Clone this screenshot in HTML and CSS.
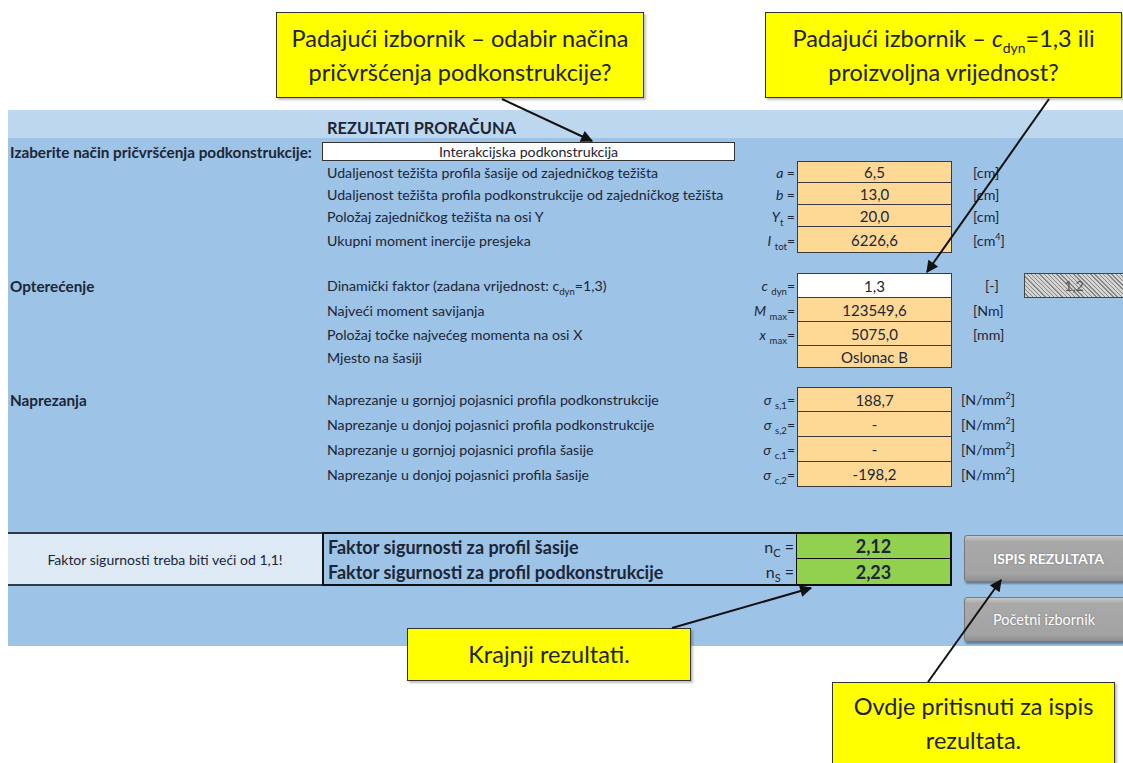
FILE: index.html
```html
<!DOCTYPE html>
<html lang="hr">

<head>
    <meta charset="UTF-8">
    <meta name="viewport" content="width=device-width, initial-scale=1.0">
    <title>Rezultati proračuna</title>
    <link rel="stylesheet" href="styles.css">
</head>

<body>
    <div class="page">
        <div class="sheet">
            <div class="row head">
                <div class="side"></div>
                <div class="title">REZULTATI PRORAČUNA</div>
            </div>

            <div class="row sel">
                <div class="side strong">Izaberite način pričvršćenja podkonstrukcije:</div>
                <div class="desc"><div class="dropdown">Interakcijska podkonstrukcija</div></div>
            </div>

            <!-- geometrija presjeka -->
            <div class="group">
                <div class="row first">
                    <div class="side"></div>
                    <div class="desc"><span>Udaljenost težišta profila šasije od zajedničkog težišta</span><span class="sym"><i>a</i> =</span></div>
                    <div class="val">6,5</div>
                    <div class="unit">[cm]</div>
                </div>
                <div class="row">
                    <div class="side"></div>
                    <div class="desc"><span>Udaljenost težišta profila podkonstrukcije od zajedničkog težišta</span><span class="sym"><i>b</i> =</span></div>
                    <div class="val">13,0</div>
                    <div class="unit">[cm]</div>
                </div>
                <div class="row">
                    <div class="side"></div>
                    <div class="desc"><span>Položaj zajedničkog težišta na osi Y</span><span class="sym"><i>Y</i><sub>t</sub> =</span></div>
                    <div class="val">20,0</div>
                    <div class="unit">[cm]</div>
                </div>
                <div class="row tall">
                    <div class="side"></div>
                    <div class="desc"><span>Ukupni moment inercije presjeka</span><span class="sym"><i>I</i> <sub>tot</sub>=</span></div>
                    <div class="val">6226,6</div>
                    <div class="unit">[cm<sup>4</sup>]</div>
                </div>
            </div>

            <!-- opterecenje -->
            <div class="group">
                <div class="row first h25">
                    <div class="side strong">Opterećenje</div>
                    <div class="desc"><span>Dinamički faktor (zadana vrijednost: c<sub>dyn</sub>=1,3)</span><span class="sym"><i>c</i> <sub>dyn</sub>=</span></div>
                    <div class="val input">1,3</div>
                    <div class="unit extra"><span class="dash">[-]</span><span class="hatch">1,2</span></div>
                </div>
                <div class="row h24">
                    <div class="side"></div>
                    <div class="desc"><span>Najveći moment savijanja</span><span class="sym"><i>M</i> <sub>max</sub>=</span></div>
                    <div class="val">123549,6</div>
                    <div class="unit">[Nm]</div>
                </div>
                <div class="row h24">
                    <div class="side"></div>
                    <div class="desc"><span>Položaj točke najvećeg momenta na osi X</span><span class="sym"><i>x</i> <sub>max</sub>=</span></div>
                    <div class="val">5075,0</div>
                    <div class="unit">[mm]</div>
                </div>
                <div class="row">
                    <div class="side"></div>
                    <div class="desc"><span>Mjesto na šasiji</span></div>
                    <div class="val">Oslonac B</div>
                    <div class="unit"></div>
                </div>
            </div>

            <!-- naprezanja -->
            <div class="group stress">
                <div class="row first h25">
                    <div class="side strong">Naprezanja</div>
                    <div class="desc"><span>Naprezanje u gornjoj pojasnici profila podkonstrukcije</span><span class="sym"><i>σ</i> <sub>s,1</sub>=</span></div>
                    <div class="val">188,7</div>
                    <div class="unit">[N/mm<sup>2</sup>]</div>
                </div>
                <div class="row h25">
                    <div class="side"></div>
                    <div class="desc"><span>Naprezanje u donjoj pojasnici profila podkonstrukcije</span><span class="sym"><i>σ</i> <sub>s,2</sub>=</span></div>
                    <div class="val">-</div>
                    <div class="unit">[N/mm<sup>2</sup>]</div>
                </div>
                <div class="row h25">
                    <div class="side"></div>
                    <div class="desc"><span>Naprezanje u gornjoj pojasnici profila šasije</span><span class="sym"><i>σ</i> <sub>c,1</sub>=</span></div>
                    <div class="val">-</div>
                    <div class="unit">[N/mm<sup>2</sup>]</div>
                </div>
                <div class="row h25">
                    <div class="side"></div>
                    <div class="desc"><span>Naprezanje u donjoj pojasnici profila šasije</span><span class="sym"><i>σ</i> <sub>c,2</sub>=</span></div>
                    <div class="val">-198,2</div>
                    <div class="unit">[N/mm<sup>2</sup>]</div>
                </div>
            </div>

            <div class="bottom">
                <div class="hint">Faktor sigurnosti treba biti veći od 1,1!</div>
                <div class="factors">
                    <div class="frow">
                        <span class="flabel">Faktor sigurnosti za profil šasije</span>
                        <span class="fsym">n<sub>C</sub> =</span>
                        <span class="fval">2,12</span>
                    </div>
                    <div class="frow">
                        <span class="flabel">Faktor sigurnosti za profil podkonstrukcije</span>
                        <span class="fsym">n<sub>S</sub> =</span>
                        <span class="fval">2,23</span>
                    </div>
                </div>
                <div class="buttons">
                    <button class="btn print">ISPIS REZULTATA</button>
                    <button class="btn">Početni izbornik</button>
                </div>
            </div>
        </div>

        <!-- oblacici s uputama -->
        <div class="note n1">Padajući izbornik – odabir načina<br>pričvršćenja podkonstrukcije?</div>
        <div class="note n2">Padajući izbornik – <i>c</i><sub>dyn</sub>=1,3 ili<br>proizvoljna vrijednost?</div>
        <div class="note n3">Krajnji rezultati.</div>
        <div class="note n4">Ovdje pritisnuti za ispis<br>rezultata.</div>

        <svg class="arrows" width="1123" height="763" viewBox="0 0 1123 763">
            <defs>
                <marker id="head" viewBox="0 0 10 10" refX="9" refY="5" markerWidth="7" markerHeight="6" orient="auto">
                    <path d="M0,0 L10,5 L0,10 z" fill="#111"/>
                </marker>
            </defs>
            <line x1="502" y1="99" x2="592" y2="141" marker-end="url(#head)"/>
            <line x1="1049" y1="99" x2="927" y2="272" marker-end="url(#head)"/>
            <line x1="672" y1="628" x2="811" y2="588" marker-end="url(#head)"/>
            <line x1="928" y1="682" x2="1001" y2="580" marker-end="url(#head)"/>
        </svg>
    </div>
</body>

</html>
```

FILE: styles.css
```css
body {
    margin: 0;
    background: #fff;
    font-family: Lato, "DejaVu Sans", sans-serif;
    color: #1c2636;
}

.page {
    position: relative;
    width: 1123px;
    height: 763px;
    overflow: hidden;
}

/* plavi list s rezultatima */
.sheet {
    margin: 110px 0 0 8px;
    width: 1115px;
    background: #9dc3e6;
    font-size: 14.2px;
}

.row {
    display: grid;
    grid-template-columns: 314px 475px 155px 171px;
    height: 22px;
    align-items: center;
}

.row.tall {
    height: 26px;
}

.row.h24 {
    height: 24px;
}

.row.h25 {
    height: 25px;
}

.head {
    height: 28px;
    background: #bdd7ee;
    align-items: end;
}

.title {
    font-weight: bold;
    font-size: 16.4px;
    padding: 0 0 1px 5px;
}

.sel {
    height: 19px;
    margin-top: 4px;
}

.side {
    padding-left: 2px;
    white-space: nowrap;
}

.strong {
    font-weight: bold;
    font-size: 15.3px;
}

.dropdown {
    width: 413px;
    height: 19px;
    box-sizing: border-box;
    background: #fff;
    border: 1px solid #333;
    text-align: center;
    line-height: 17px;
}

.desc {
    display: flex;
    justify-content: space-between;
    align-items: center;
    padding-left: 5px;
    padding-right: 2px;
    white-space: nowrap;
    height: 100%;
}

.sel .desc {
    padding-left: 0;
}

.sym {
    font-size: 14px;
}

sub {
    font-size: 9.5px;
    line-height: 0;
}

sup {
    font-size: 9px;
    line-height: 0;
}

.group {
    margin-bottom: 20px;
}

.group + .group {
    margin-bottom: 19px;
}

.group.stress {
    margin-bottom: 45px;
}

.val {
    height: 100%;
    box-sizing: border-box;
    background: #fdd995;
    border: 1px solid #3a3a3a;
    border-top: none;
    text-align: center;
    display: flex;
    align-items: center;
    justify-content: center;
    font-size: 15px;
}

.first .val {
    border-top: 1px solid #3a3a3a;
}

.val.input {
    background: #fff;
}

.unit {
    padding-left: 21px;
    white-space: nowrap;
}

.stress .unit {
    padding-left: 9px;
}

.unit.extra {
    display: flex;
    align-items: center;
    height: 100%;
    padding-left: 33px;
}

.dash {
    width: 39px;
}

.hatch {
    flex: 1;
    height: 25px;
    box-sizing: border-box;
    border: 1px solid #444;
    border-right: none;
    background: repeating-linear-gradient(45deg, #d4d4d4 0 2px, #868686 2px 3px);
    color: #555;
    text-align: center;
    line-height: 23px;
}

/* faktori sigurnosti */
.bottom {
    display: flex;
    align-items: flex-start;
    height: 114px;
}

.hint {
    flex-shrink: 0;
    width: 314px;
    height: 54px;
    box-sizing: border-box;
    border-top: 2px solid #2e3a48;
    border-bottom: 2px solid #2e3a48;
    background: #dde9f5;
    font-size: 14px;
    display: flex;
    align-items: center;
    justify-content: center;
}

.factors {
    flex-shrink: 0;
    width: 630px;
    height: 54px;
    box-sizing: border-box;
    border: 2px solid #111;
}

.frow {
    display: grid;
    grid-template-columns: 1fr 50px 154px;
    height: 25px;
    align-items: center;
}

.flabel {
    font-weight: bold;
    font-size: 18px;
    padding-left: 4px;
    white-space: nowrap;
}

.fsym {
    font-size: 16px;
    text-align: right;
    padding-right: 2px;
}

.fsym sub {
    font-size: 11px;
}

.fval {
    height: 100%;
    box-sizing: border-box;
    background: #92d050;
    border-left: 1px solid #111;
    font-weight: bold;
    font-size: 18px;
    display: flex;
    align-items: center;
    justify-content: center;
}

.frow:first-child .fval {
    border-bottom: 1px solid #111;
}

.buttons {
    flex-shrink: 0;
    display: flex;
    flex-direction: column;
    gap: 15px;
    margin: 3px 0 0 12px;
}

.btn {
    width: 170px;
    height: 45px;
    border: 1px solid #7a7a7a;
    border-radius: 3px;
    background: linear-gradient(#c8c8c8 0, #a9a9a9 12%, #a3a3a3 85%, #8e8e8e 100%);
    box-shadow: 1px 2px 2px rgba(0, 0, 0, 0.35);
    color: #fff;
    font: 14.5px Lato, sans-serif;
    text-align: left;
    padding-left: 28px;
    text-shadow: 0 0 2px rgba(0, 0, 0, 0.3);
}

.btn.print {
    font-weight: bold;
    font-size: 14px;
    height: 47px;
}

/* oblacici */
.note {
    position: absolute;
    box-sizing: border-box;
    background: #ffff00;
    border: 1.5px solid #333;
    box-shadow: 2px 2px 2px rgba(0, 0, 0, 0.25);
    font-size: 23.5px;
    line-height: 34px;
    text-align: center;
    color: #222;
    padding-top: 8px;
}

.note sub {
    font-size: 14px;
}

.n1 {
    left: 276px;
    top: 12px;
    width: 368px;
    height: 86px;
}

.n2 {
    left: 765px;
    top: 12px;
    width: 357px;
    height: 86px;
}

.n3 {
    left: 407px;
    top: 628px;
    width: 284px;
    height: 53px;
    padding-top: 8px;
}

.n4 {
    left: 832px;
    top: 682px;
    width: 283px;
    height: 100px;
    padding-top: 6px;
}

.arrows {
    position: absolute;
    left: 0;
    top: 0;
    pointer-events: none;
}

.arrows line {
    stroke: #111;
    stroke-width: 2;
}
```
